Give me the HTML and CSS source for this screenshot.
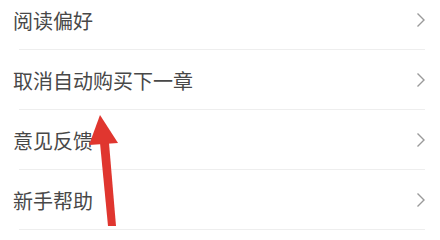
FILE: index.html
```html
<!DOCTYPE html>
<html lang="zh">
<head>
<meta charset="utf-8">
<link rel="stylesheet" href="styles.css">
</head>
<body>
<div class="page">
  <ul class="menu">
    <li class="item"><span class="label">阅读偏好</span><svg class="chev" viewBox="0 0 10 16"><path d="M1.5 1.5 L8 8 L1.5 14.5"/></svg></li>
    <li class="item"><span class="label">取消自动购买下一章</span><svg class="chev" viewBox="0 0 10 16"><path d="M1.5 1.5 L8 8 L1.5 14.5"/></svg></li>
    <li class="item"><span class="label">意见反馈</span><svg class="chev" viewBox="0 0 10 16"><path d="M1.5 1.5 L8 8 L1.5 14.5"/></svg></li>
    <li class="item"><span class="label">新手帮助</span><svg class="chev" viewBox="0 0 10 16"><path d="M1.5 1.5 L8 8 L1.5 14.5"/></svg></li>
  </ul>
  <svg class="arrow" viewBox="0 0 440 240" width="440" height="240">
    <polygon points="100,143 109,143 116,226 108,226" fill="#e0362f"/>
    <polygon points="100,115 89,145 118,143" fill="#e0362f"/>
  </svg>
</div>
</body>
</html>
```

FILE: styles.css
```css
html, body {
  margin: 0;
  padding: 0;
  background: #ffffff;
}
.page {
  position: relative;
  width: 440px;
  height: 240px;
  overflow: hidden;
  font-family: "Noto Sans CJK SC", "Noto Sans", sans-serif;
}
.menu {
  list-style: none;
  margin: -10px 0 0 0;
  padding: 0;
}
.item {
  height: 59px;
  display: flex;
  align-items: center;
  justify-content: space-between;
  padding: 0 14px 0 13px;
  position: relative;
}
.item::after {
  content: "";
  position: absolute;
  left: 19px;
  right: 15px;
  bottom: -1px;
  height: 1px;
  background: #eeeeee;
}
.item + .item {
  margin-top: 1px;
}
.label {
  font-size: 20px;
  color: #484848;
  line-height: 1;
  padding-top: 2px;
}
.chev {
  width: 10px;
  height: 16px;
  fill: none;
  stroke: #9a9a9a;
  stroke-width: 1.4;
}
.arrow {
  position: absolute;
  left: 0;
  top: 0;
  pointer-events: none;
}
```
